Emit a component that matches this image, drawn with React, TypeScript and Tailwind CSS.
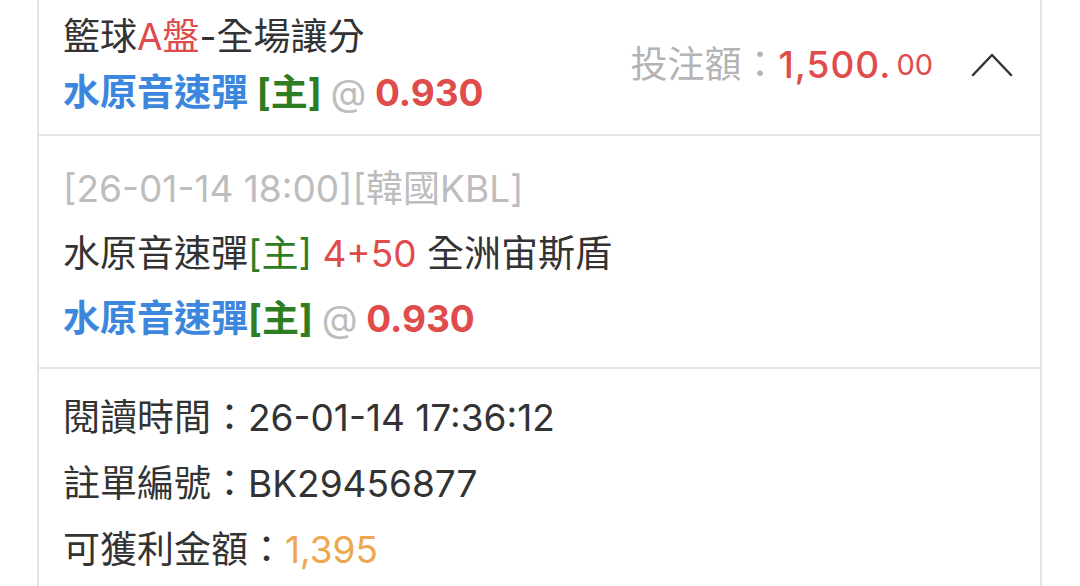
export default function App() {
  const font = { fontFamily: 'Inter, "Noto Sans CJK TC", sans-serif' };
  return (
    <div lang="zh-Hant" className="min-h-[586px] bg-white" style={font}>
      <div className="ml-[37px] w-[1005px] border-x-2 border-[#e4e4e4] text-[37px] text-[#333]">
        {/* Header */}
        <div className="flex items-center border-b-2 border-[#e4e4e4] pl-[24px] pr-[27px] pt-[9px] pb-[13px]">
          <div className="flex-1 leading-[56px]">
            <div>
              籃球<span className="text-[#e04b4b]">A盤</span>-全場讓分
            </div>
            <div className="font-bold">
              <span className="text-[#3c87dd]">水原音速彈</span>{" "}
              <span className="text-[#2f7d22]">[主]</span>{" "}
              <span className="font-normal text-[#bdbdbd]">@</span>{" "}
              <span className="text-[#e04b4b]">0.930</span>
            </div>
          </div>
          <div className="flex items-center">
            <span className="text-[#b4b4b4]">投注額：</span>
            <span className="font-medium tracking-[1px] text-[#e04b4b]">1,500.</span>
            <span className="ml-[5px] text-[29px] text-[#e04b4b]">00</span>
            <svg
              className="ml-[38px]"
              width="42"
              height="26"
              viewBox="0 0 42 26"
              fill="none"
              stroke="#333"
              strokeWidth="2.5"
              strokeLinecap="round"
              strokeLinejoin="round"
            >
              <polyline points="2,23 21,3 40,23" />
            </svg>
          </div>
        </div>

        {/* Match info */}
        <div className="border-b-2 border-[#e4e4e4] pl-[24px] pt-[20px] pb-[16px] leading-[65px]">
          <div className="text-[#bdbdbd]">[26-01-14 18:00][韓國KBL]</div>
          <div>
            水原音速彈<span className="text-[#2f7d22]">[主]</span>{" "}
            <span className="text-[#e04b4b]">4+50</span> 全洲宙斯盾
          </div>
          <div className="font-bold">
            <span className="text-[#3c87dd]">水原音速彈</span>
            <span className="text-[#2f7d22]">[主]</span>{" "}
            <span className="font-normal text-[#bdbdbd]">@</span>{" "}
            <span className="text-[#e04b4b]">0.930</span>
          </div>
        </div>

        {/* Details */}
        <div className="pl-[24px] pt-[16px] pb-[20px] leading-[66px]">
          <div>閱讀時間：26-01-14 17:36:12</div>
          <div>註單編號：BK29456877</div>
          <div>
            可獲利金額：<span className="text-[#eda74f]">1,395</span>
          </div>
        </div>
      </div>
    </div>
  );
}
